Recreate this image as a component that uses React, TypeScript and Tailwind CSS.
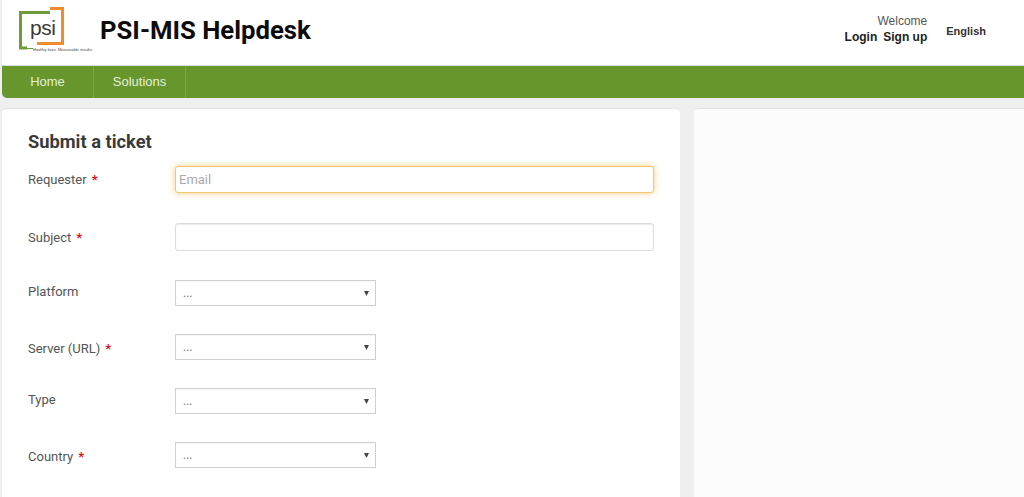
const FONT = "font-['Roboto','Liberation_Sans',sans-serif]";

const ROWS = [
  { label: "Platform", required: false, h: "mt-[29px]", pt: "pt-[2px]" },
  { label: "Server (URL)", required: true, h: "mt-[28px]", pt: "pt-[5px]" },
  { label: "Type", required: false, h: "mt-[28px]", pt: "pt-[2px]" },
  { label: "Country", required: true, h: "mt-[28px]", pt: "pt-[5px]" },
];

function Logo() {
  return (
    <div className="relative ml-[17px] mt-[7px] h-[46px] w-[74px] shrink-0">
      <svg width="74" height="46" viewBox="0 0 74 46" className="absolute left-0 top-0">
        <path d="M31 5.5H1.5V41H8" fill="none" stroke="#6f9c3a" strokeWidth="3" />
        <path d="M31 1.5H43.5V36.5H18" fill="none" stroke="#f08c30" strokeWidth="3" />
        <path d="M8 41.5H14" stroke="#6f9c3a" strokeWidth="1" />
      </svg>
      <span className="absolute left-[11px] top-[8px] font-['Liberation_Sans',sans-serif] text-[21px] leading-[26px] tracking-[-0.5px] text-[#3c3c3c]">
        psi
      </span>
      <span className="absolute left-[14px] top-[40px] whitespace-nowrap font-['Liberation_Sans',sans-serif] text-[4px] leading-[5px] text-[#444]">
        Healthy lives. Measurable results.
      </span>
    </div>
  );
}

function Label({ text, required, className }: { text: string; required: boolean; className?: string }) {
  return (
    <div className={`w-[147px] shrink-0 text-[13px] leading-[20px] text-[#555] ${className ?? ""}`}>
      {text}
      {required && <span className="ml-[5px] font-bold text-[#e0101a]">*</span>}
    </div>
  );
}

function SelectBox() {
  return (
    <div className="flex h-[26px] w-[201px] items-center justify-between border border-[#d0d0d0] bg-white pl-[7px] pr-[6px] shadow-[inset_0_1px_1px_rgba(0,0,0,0.04)]">
      <span className="text-[12px] leading-[16px] text-[#777]">...</span>
      <svg width="5" height="5" viewBox="0 0 5 5">
        <path d="M0 0H5L2.5 5Z" fill="#444" />
      </svg>
    </div>
  );
}

export default function App() {
  return (
    <div className={`${FONT} h-[497px] w-[1024px] overflow-hidden bg-[#efefef]`}>
      <header className="ml-[2px] flex h-[66px] border-b border-[#dcdcdc] bg-white">
        <Logo />
        <h1 className="ml-[7px] mt-[14px] text-[25.7px] font-bold leading-[32px] text-[#0c0c0c]">PSI-MIS Helpdesk</h1>
        <div className="ml-auto mt-[14px] flex items-start font-['Liberation_Sans',sans-serif]">
          <div className="text-right text-[12px] leading-[15px]">
            <div className="text-[#555]">Welcome</div>
            <div className="mt-[1px] font-bold text-[#222]">
              Login<span className="ml-[6px]">Sign up</span>
            </div>
          </div>
          <div className="ml-[19px] mr-[38px] mt-[10px] text-[11px] font-bold leading-[15px] text-[#333]">English</div>
        </div>
      </header>

      <nav className="ml-[2px] flex h-[32px] rounded-bl-[5px] bg-[#66962c] font-['Liberation_Sans',sans-serif] text-[13px] text-[#e6efd9]">
        <a className="flex w-[92px] items-center justify-center border-r border-[#7ba549]">Home</a>
        <a className="flex w-[92px] items-center justify-center border-r border-[#7ba549]">Solutions</a>
      </nav>

      <main className="ml-[2px] mt-[10px] flex h-[400px] gap-[14px]">
        <section className="w-[678px] shrink-0 rounded-t-[5px] border-t border-[#e2e2e2] bg-white pl-[26px] pr-[26px] pt-[22px]">
          <h2 className="text-[18.3px] font-bold leading-[21px] text-[#3a3a3a]">Submit a ticket</h2>

          <div className="mt-[14px] flex">
            <Label text="Requester" required className="pt-[4px]" />
            <input
              readOnly
              placeholder="Email"
              className="h-[27px] flex-1 rounded-[3px] border border-[#f5c672] bg-white px-[3px] text-[13px] text-[#555] shadow-[0_0_6px_rgba(245,190,90,0.8)] outline-none placeholder:text-[#aaa]"
            />
          </div>

          <div className="mt-[30px] flex">
            <Label text="Subject" required className="pt-[5px]" />
            <input
              readOnly
              className="h-[28px] flex-1 rounded-[3px] border border-[#dcdcdc] bg-white shadow-[inset_0_1px_1px_rgba(0,0,0,0.08)] outline-none"
            />
          </div>

          {ROWS.map((row) => (
            <div key={row.label} className={`${row.h} flex`}>
              <Label text={row.label} required={row.required} className={row.pt} />
              <SelectBox />
            </div>
          ))}
        </section>
        <aside className="flex-1 rounded-tl-[5px] border-t border-[#e2e2e2] bg-[#fcfcfc]" />
      </main>
    </div>
  );
}
